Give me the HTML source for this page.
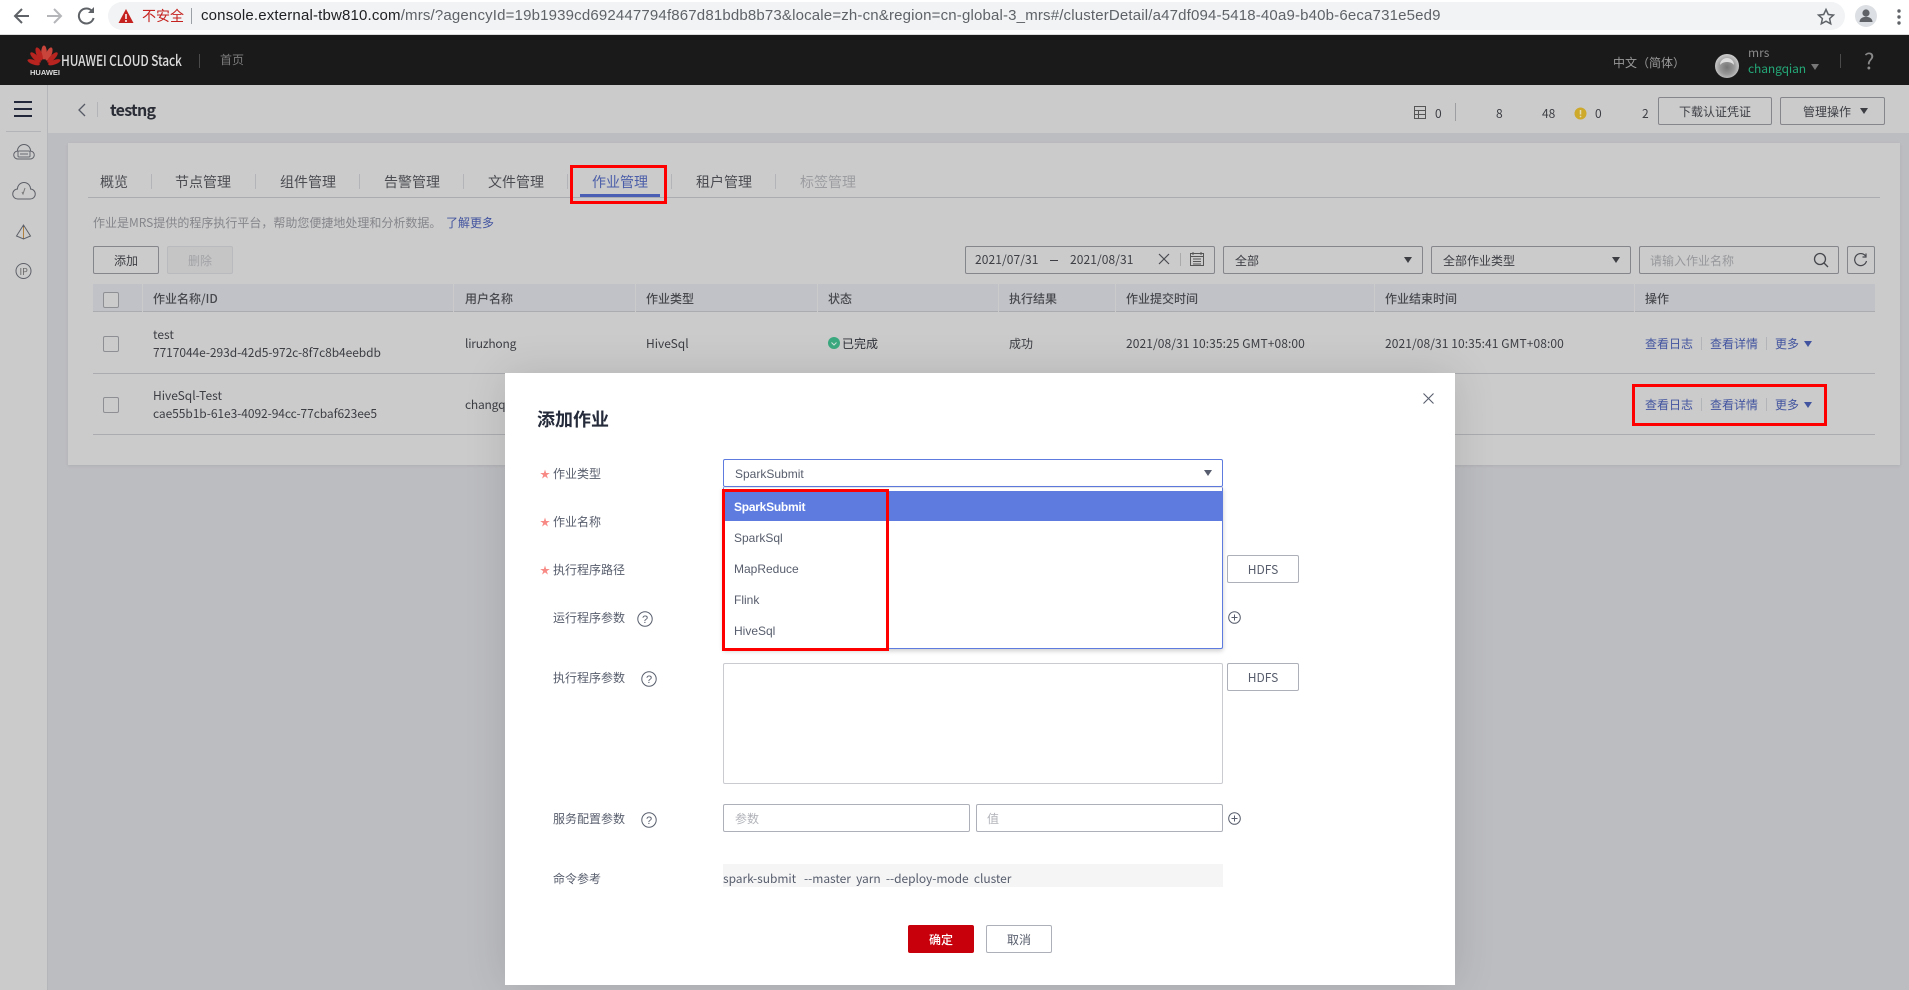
<!DOCTYPE html>
<html lang="zh-CN"><head><meta charset="utf-8"><title>添加作业</title>
<style>
*{box-sizing:border-box;margin:0;padding:0}
html,body{width:1909px;height:990px;overflow:hidden;background:#bcbdc1}
body{position:relative;font:12px/16px "Noto Sans CJK SC","Liberation Sans",sans-serif;color:#3c3e44}
.a,.t,svg{position:absolute}
.t{white-space:nowrap;height:16px;margin-top:1px}
.b{position:absolute;border:1px solid #85868c;border-radius:2px;text-align:center;line-height:28px}
.m{border-color:#adb0b8;color:#575d6c;background:#fff}
.h{position:absolute;top:284px;height:28px;width:1px;background:#cbcbcb}
.l{position:absolute;background:#abacb0;height:1px}
.th{font-weight:500;color:#47494f;top:290px}
.lk{color:#42549f}
.tab{font-size:14px;top:172px;height:18px;line-height:18px;color:#4b4c52}
.sp{position:absolute;width:1px;background:#b3b4b8}
.lb{color:#575d6c}
.s{color:#f88a86;font-size:10px}
.r{position:absolute;border:3px solid #f00}
.i{color:#575d6c;left:734px;font-family:"Liberation Sans",sans-serif}
.ts{letter-spacing:.08px}
.id{letter-spacing:-.07px}
svg{overflow:visible}
</style></head><body>

<!-- Browser chrome -->
<div class="a" style="left:0;top:0;width:1909px;height:35px;background:#fff;border-bottom:1px solid #dcdcdc"></div>
<svg style="left:0;top:0" width="110" height="34" fill="none" stroke-width="2">
<path d="M29 16H16M22 9l-7 7 7 7" stroke="#5f6368"/>
<path d="M47 16h13M54 9l7 7-7 7" stroke="#b4b6b9"/>
<path d="M92 11a7.5 7.5 0 1 0 1.6 7" stroke="#5f6368"/><path d="M94 7v6h-6z" fill="#5f6368"/>
</svg>
<div class="a" style="left:108px;top:2px;width:1737px;height:28px;border-radius:14px;background:#f1f3f4"></div>
<svg style="left:118px;top:8px" width="18" height="18"><path d="M8 1l7.500 14H.5z" fill="#c5221f"/><path d="M8 6v5M8 12v2" stroke="#fff" stroke-width="1.500"/></svg>
<div class="t" style="left:142px;top:7px;font-size:14px;color:#c5221f">不安全</div>
<div class="a" style="left:191px;top:8px;width:1px;height:16px;background:#9aa0a6"></div>
<div class="t" style="left:201px;top:6px;font:15px/18px 'Liberation Sans',sans-serif;color:#202124;letter-spacing:.17px;height:18px">console.external-tbw810.com<span style="color:#5f6368">/mrs/?agencyId=19b1939cd692447794f867d81bdb8b73&amp;locale=zh-cn&amp;region=cn-global-3_mrs#/clusterDetail/a47df094-5418-40a9-b40b-6eca731e5ed9</span></div>
<svg style="left:1816px;top:7px" width="20" height="20"><path d="M10 2.500l2.300 5 5.200.6-3.900 3.500 1.100 5.200L10 14.200l-4.700 2.600 1.100-5.200L2.500 8.100l5.200-.6z" fill="none" stroke="#5f6368" stroke-width="1.500"/></svg>
<svg style="left:1855px;top:5px" width="24" height="24"><ellipse cx="11" cy="11" rx="11" ry="11" fill="#dcdfe3"/><circle cx="11" cy="8" r="3.600" fill="#5f6368"/><path d="M4.500 17c0-7 13-7 13 0z" fill="#5f6368"/></svg>
<svg style="left:1895px;top:8px" width="8" height="18" fill="#5f6368"><circle cx="4" cy="3" r="1.700"/><circle cx="4" cy="9" r="1.700"/><circle cx="4" cy="15" r="1.700"/></svg>

<!-- Dark top bar -->
<div class="a" style="left:0;top:35px;width:1909px;height:50px;background:#1a1a1a"></div>
<svg style="left:30px;top:46px" width="30" height="22"><g fill="#b8241f">
<ellipse cx="14" cy="6.500" rx="2.800" ry="7" fill="#c9443b"/>
<ellipse cx="14" cy="7" rx="2.800" ry="7" transform="rotate(-22 14 20)"/>
<ellipse cx="14" cy="7" rx="2.800" ry="7" transform="rotate(22 14 20)" fill="#c9443b"/>
<ellipse cx="14" cy="8" rx="2.500" ry="7" transform="rotate(-45 14 20)"/>
<ellipse cx="14" cy="8" rx="2.500" ry="7" transform="rotate(45 14 20)"/>
<ellipse cx="14" cy="9" rx="2.300" ry="6.500" transform="rotate(-70 14 20)"/>
<ellipse cx="14" cy="9" rx="2.300" ry="6.500" transform="rotate(70 14 20)"/>
</g></svg>
<div class="t" style="left:30px;top:67px;font:700 7.500px/9px 'Liberation Sans',sans-serif;color:#ddd;height:9px">HUAWEI</div>
<div class="t" style="left:61px;top:50px;font:500 15px/20px 'Noto Sans CJK SC',sans-serif;color:#dcdcdc;height:20px;letter-spacing:-.15px;transform-origin:left;transform:scaleX(.795)">HUAWEI CLOUD Stack</div>
<div class="a" style="left:199px;top:54px;width:1px;height:14px;background:#4a4a4a"></div>
<div class="t" style="left:220px;top:51px;color:#7c7c7c">首页</div>
<div class="t" style="left:1613px;top:54px;color:#9a9a9a">中文（简体）</div>
<svg style="left:1715px;top:54px" width="24" height="24"><defs><radialGradient id="av" cx=".5" cy=".55" r=".55"><stop offset="0" stop-color="#757575"/><stop offset=".55" stop-color="#999"/><stop offset="1" stop-color="#cfcfcf"/></radialGradient></defs><circle cx="12" cy="12" r="12" fill="url(#av)"/><path d="M5 11a7 7 0 0 1 14 0c-3-4-11-4-14 0z" fill="#dedede"/></svg>
<div class="t" style="left:1748px;top:44px;color:#8a8a8a">mrs</div>
<div class="t" style="left:1748px;top:60px;color:#24a878;letter-spacing:-.1px">changqian</div>
<svg style="left:1811px;top:64px" width="9" height="7"><path d="M0 0h8L4 6z" fill="#777"/></svg>
<div class="a" style="left:1840px;top:54px;width:1px;height:14px;background:#4a4a4a"></div>
<div class="t" style="left:1864px;top:47px;font:22px/24px 'Noto Sans CJK SC',sans-serif;color:#8a8a8a;height:24px">?</div>

<!-- Sidebar -->
<div class="a" style="left:0;top:85px;width:48px;height:905px;background:#cbcbcb;border-right:1px solid #b5b6b9"></div>
<svg style="left:14px;top:100px" width="19" height="18" fill="#22283a"><rect width="18" height="2" y="1"/><rect width="18" height="2" y="8"/><rect width="18" height="2" y="15"/></svg>
<div class="a" style="left:6px;top:131px;width:35px;height:1px;background:#b3b4b8"></div>
<svg style="left:12px;top:143px" width="24" height="140" fill="none" stroke="#5d6068" stroke-width="1">
<path d="M6 16a4 4 0 0 1 -.5-8 6.500 6.500 0 0 1 13 0 4 4 0 0 1-.5 8z"/><rect x="6" y="8" width="12" height="6" rx="1" stroke="#676a72"/><path d="M8 11h8" stroke="#676a72"/>
<path d="M6 56a5 5 0 0 1-.5-10 6.500 6.500 0 0 1 13 0 5 5 0 0 1-.5 10z"/><path d="M13 45l-2 6-1-2" stroke="#777"/>
<path d="M11.500 82l-7 11 7 3 7-3zM11.500 82v14" /><path d="M11.500 84v11" stroke="#b08040"/>
<circle cx="11.500" cy="128" r="7.500"/><text x="7.500" y="132" font-size="9" font-family="Noto Sans CJK SC,sans-serif" fill="#666" stroke="none">IP</text>
</svg>

<!-- Sub header -->
<div class="a" style="left:48px;top:85px;width:1861px;height:48px;background:#cbcbcb"></div>
<svg style="left:76px;top:102px" width="12" height="16"><path d="M9 2L3 8l6 6" fill="none" stroke="#555a66" stroke-width="1.300"/></svg>
<div class="a" style="left:97px;top:102px;width:1px;height:15px;background:#b3b4b8"></div>
<div class="t" style="left:110px;top:97px;font-size:16px;font-weight:700;color:#2a2d36;height:22px;line-height:22px;letter-spacing:-.75px">testng</div>

<svg style="left:1414px;top:106px" width="13" height="14" fill="none" stroke="#555"><rect x=".5" y=".5" width="11" height="12"/><path d="M.5 4.500h11M.5 8.500h11M4.500 4.500v8"/></svg>
<div class="t" style="left:1435px;top:105px">0</div>
<div class="a" style="left:1455px;top:103px;width:1px;height:18px;background:#9d9ea2"></div>
<div class="t" style="left:1496px;top:105px">8</div>
<div class="t" style="left:1542px;top:105px">48</div>
<svg style="left:1574px;top:107px" width="13" height="13"><circle cx="6.500" cy="6.500" r="6" fill="#cda92c"/><path d="M6.500 3v4.500M6.500 8.700v1.500" stroke="#e6dcb4" stroke-width="1.500"/></svg>
<div class="t" style="left:1595px;top:105px">0</div>
<div class="t" style="left:1642px;top:105px">2</div>
<div class="b" style="left:1658px;top:97px;width:114px;height:28px">下载认证凭证</div>
<div class="b" style="left:1780px;top:97px;width:105px;height:28px;text-align:left;padding-left:22px">管理操作</div>
<svg style="left:1860px;top:108px" width="9" height="7"><path d="M0 0h8L4 6z" fill="#3c3e44"/></svg>

<!-- Card -->
<div class="a" style="left:68px;top:143px;width:1832px;height:322px;background:#cbcbcb;box-shadow:0 1px 3px rgba(0,0,0,.08)"></div>
<div class="t tab" style="left:100px">概览</div><div class="sp" style="left:151px;top:174px;height:15px"></div>
<div class="t tab" style="left:175px">节点管理</div><div class="sp" style="left:255px;top:174px;height:15px"></div>
<div class="t tab" style="left:280px">组件管理</div><div class="sp" style="left:359px;top:174px;height:15px"></div>
<div class="t tab" style="left:384px">告警管理</div><div class="sp" style="left:463px;top:174px;height:15px"></div>
<div class="t tab" style="left:488px">文件管理</div><div class="sp" style="left:567px;top:174px;height:15px"></div>
<div class="t tab" style="left:592px;color:#4a5da8">作业管理</div><div class="sp" style="left:671px;top:174px;height:15px"></div>
<div class="t tab" style="left:696px">租户管理</div><div class="sp" style="left:775px;top:174px;height:15px"></div>
<div class="t tab" style="left:800px;color:#9c9da1">标签管理</div>
<div class="l" style="left:88px;top:197px;width:1792px"></div>
<div class="a" style="left:580px;top:194px;width:80px;height:3px;background:#4a5fb3"></div>

<div class="t" style="left:93px;top:214px;color:#85868b">作业是MRS提供的程序执行平台，帮助您便捷地处理和分析数据。</div>
<div class="t lk" style="left:446px;top:214px">了解更多</div>
<div class="b" style="left:93px;top:246px;width:66px;height:28px">添加</div>
<div class="b" style="left:167px;top:246px;width:66px;height:28px;background:#c5c5c6;border-color:#b9babd;color:#a2a3a6">删除</div>

<div class="b" style="left:965px;top:246px;width:250px;height:28px"></div>
<div class="t ts" style="left:975px;top:251px">2021/07/31</div>
<div class="a" style="left:1050px;top:260px;width:8px;height:1px;background:#3c3e44"></div>
<div class="t ts" style="left:1070px;top:251px">2021/08/31</div>
<svg style="left:1158px;top:253px" width="12" height="12"><path d="M1 1l10 10M11 1L1 11" stroke="#4a4c52" stroke-width="1.200"/></svg>
<div class="a" style="left:1180px;top:253px;width:1px;height:13px;background:#aaa"></div>
<svg style="left:1190px;top:252px" width="14" height="15" fill="none" stroke="#555"><rect x=".5" y="1.500" width="13" height="12"/><path d="M.5 4.500h13M3 0v3M11 0v3M3 7h8M3 9.500h8M3 12h8"/></svg>

<div class="b" style="left:1223px;top:246px;width:200px;height:28px;text-align:left;padding-left:11px">全部</div>
<svg style="left:1404px;top:257px" width="9" height="7"><path d="M0 0h8L4 6z" fill="#3c3e44"/></svg>
<div class="b" style="left:1431px;top:246px;width:200px;height:28px;text-align:left;padding-left:11px">全部作业类型</div>
<svg style="left:1612px;top:257px" width="9" height="7"><path d="M0 0h8L4 6z" fill="#3c3e44"/></svg>
<div class="b" style="left:1639px;top:246px;width:200px;height:28px;text-align:left;padding-left:10px;color:#97989c">请输入作业名称</div>
<svg style="left:1813px;top:252px" width="16" height="16" fill="none" stroke="#45474d" stroke-width="1.300"><circle cx="7" cy="7" r="5.500"/><path d="M11 11l4 4"/></svg>
<div class="b" style="left:1847px;top:246px;width:28px;height:28px"></div>
<svg style="left:1854px;top:253px" width="14" height="14" fill="none" stroke="#45474d" stroke-width="1.200"><path d="M11.500 3a6 6 0 1 0 1 5"/><path d="M12 .5v3.500H8.500"/></svg>

<!-- Table -->
<div class="a" style="left:93px;top:284px;width:1782px;height:28px;background:#c1c2c7;border-bottom:1px solid #abacb0"></div>
<div class="h" style="left:142px"></div><div class="h" style="left:453px"></div><div class="h" style="left:635px"></div><div class="h" style="left:817px"></div><div class="h" style="left:998px"></div><div class="h" style="left:1115px"></div><div class="h" style="left:1374px"></div><div class="h" style="left:1634px"></div>
<div class="a" style="left:103px;top:292px;width:16px;height:16px;border:1px solid #8e8f94;border-radius:2px;background:#cbcbcb"></div>
<div class="t th" style="left:153px">作业名称/ID</div>
<div class="t th" style="left:465px">用户名称</div>
<div class="t th" style="left:646px">作业类型</div>
<div class="t th" style="left:828px">状态</div>
<div class="t th" style="left:1009px">执行结果</div>
<div class="t th" style="left:1126px">作业提交时间</div>
<div class="t th" style="left:1385px">作业结束时间</div>
<div class="t th" style="left:1645px">操作</div>

<div class="a" style="left:103px;top:336px;width:16px;height:16px;border:1px solid #8e8f94;border-radius:2px"></div>
<div class="t" style="left:153px;top:326px">test</div>
<div class="t id" style="left:153px;top:344px">7717044e-293d-42d5-972c-8f7c8b4eebdb</div>
<div class="t" style="left:465px;top:335px;letter-spacing:-.2px">liruzhong</div>
<div class="t" style="left:646px;top:335px">HiveSql</div>
<svg style="left:828px;top:337px" width="12" height="12"><circle cx="6" cy="6" r="6" fill="#3ba97f"/><path d="M3.500 5.500L6 8l2.500-2.500" fill="none" stroke="#cfe5dc" stroke-width="1"/></svg>
<div class="t" style="left:842px;top:335px;color:#2e3038">已完成</div>
<div class="t" style="left:1009px;top:335px">成功</div>
<div class="t ts" style="left:1126px;top:335px">2021/08/31 10:35:25 GMT+08:00</div>
<div class="t ts" style="left:1385px;top:335px">2021/08/31 10:35:41 GMT+08:00</div>
<div class="t lk" style="left:1645px;top:335px">查看日志</div><div class="sp" style="left:1701px;top:337px;height:13px"></div>
<div class="t lk" style="left:1710px;top:335px">查看详情</div><div class="sp" style="left:1766px;top:337px;height:13px"></div>
<div class="t lk" style="left:1775px;top:335px">更多</div>
<svg style="left:1804px;top:341px" width="9" height="7"><path d="M0 0h8L4 6z" fill="#42549f"/></svg>
<div class="l" style="left:93px;top:373px;width:1782px"></div>

<div class="a" style="left:103px;top:397px;width:16px;height:16px;border:1px solid #8e8f94;border-radius:2px"></div>
<div class="t" style="left:153px;top:387px">HiveSql-Test</div>
<div class="t id" style="left:153px;top:405px">cae55b1b-61e3-4092-94cc-77cbaf623ee5</div>
<div class="t" style="left:465px;top:396px;letter-spacing:-.2px">changqian</div>
<div class="t lk" style="left:1645px;top:396px">查看日志</div><div class="sp" style="left:1701px;top:398px;height:13px"></div>
<div class="t lk" style="left:1710px;top:396px">查看详情</div><div class="sp" style="left:1766px;top:398px;height:13px"></div>
<div class="t lk" style="left:1775px;top:396px">更多</div>
<svg style="left:1804px;top:402px" width="9" height="7"><path d="M0 0h8L4 6z" fill="#42549f"/></svg>
<div class="l" style="left:93px;top:434px;width:1782px"></div>

<div class="r" style="left:570px;top:165px;width:97px;height:39px"></div>
<div class="r" style="left:1632px;top:384px;width:195px;height:42px"></div>

<!-- Modal -->
<div class="a" style="left:505px;top:373px;width:950px;height:612px;background:#fff;box-shadow:0 0 40px rgba(0,0,0,.12)"></div>
<div class="t" style="left:537px;top:406px;font-size:18px;font-weight:700;color:#252b3a;height:24px;line-height:24px">添加作业</div>
<svg style="left:1423px;top:393px" width="11" height="11"><path d="M.5.500l10 10M10.500.500l-10 10" stroke="#575d6c" stroke-width="1.100"/></svg>

<div class="t s" style="left:540px;top:465px">★</div><div class="t lb" style="left:553px;top:465px">作业类型</div>
<div class="t s" style="left:540px;top:513px">★</div><div class="t lb" style="left:553px;top:513px">作业名称</div>
<div class="t s" style="left:540px;top:561px">★</div><div class="t lb" style="left:553px;top:561px">执行程序路径</div>
<div class="t lb" style="left:553px;top:609px">运行程序参数</div>
<div class="t lb" style="left:553px;top:669px">执行程序参数</div>
<div class="t lb" style="left:553px;top:810px">服务配置参数</div>
<div class="t lb" style="left:553px;top:870px">命令参考</div>
<svg style="left:637px;top:611px" width="16" height="16" fill="none" stroke="#575d6c"><circle cx="8" cy="8" r="7.200"/><text x="5" y="12" font-size="11" font-family="Liberation Sans,sans-serif" fill="#575d6c" stroke="none">?</text></svg>
<svg style="left:641px;top:671px" width="16" height="16" fill="none" stroke="#575d6c"><circle cx="8" cy="8" r="7.200"/><text x="5" y="12" font-size="11" font-family="Liberation Sans,sans-serif" fill="#575d6c" stroke="none">?</text></svg>
<svg style="left:641px;top:812px" width="16" height="16" fill="none" stroke="#575d6c"><circle cx="8" cy="8" r="7.200"/><text x="5" y="12" font-size="11" font-family="Liberation Sans,sans-serif" fill="#575d6c" stroke="none">?</text></svg>

<div class="b m" style="left:1227px;top:555px;width:72px;height:28px">HDFS</div>
<div class="b m" style="left:1227px;top:663px;width:72px;height:28px">HDFS</div>
<svg style="left:1228px;top:611px" width="13" height="13" fill="none" stroke="#575d6c"><circle cx="6.500" cy="6.500" r="5.800"/><path d="M6.500 3.500v6M3.500 6.500h6"/></svg>
<svg style="left:1228px;top:812px" width="13" height="13" fill="none" stroke="#575d6c"><circle cx="6.500" cy="6.500" r="5.800"/><path d="M6.500 3.500v6M3.500 6.500h6"/></svg>

<div class="a" style="left:723px;top:663px;width:500px;height:121px;border:1px solid #c9cbd1;border-radius:2px"></div>
<div class="b m" style="left:723px;top:804px;width:247px;height:28px;text-align:left;padding-left:11px;color:#b0b2b8">参数</div>
<div class="b m" style="left:976px;top:804px;width:247px;height:28px;text-align:left;padding-left:10px;color:#b0b2b8">值</div>
<div class="a" style="left:723px;top:864px;width:500px;height:23px;background:#f5f5f6"></div>
<div class="t lb" style="left:723px;top:870px;white-space:pre;letter-spacing:-.05px">spark-submit   --master  yarn  --deploy-mode  cluster</div>
<div class="b" style="left:908px;top:925px;width:66px;height:28px;background:#c7000b;border-color:#c7000b;color:#fff;font-weight:500">确定</div>
<div class="b m" style="left:986px;top:925px;width:66px;height:28px">取消</div>

<!-- Select + dropdown -->
<div class="b" style="left:723px;top:459px;width:500px;height:28px;border-color:#5e7ce0;text-align:left;padding-left:11px;color:#575d6c;background:#fff;font-family:'Liberation Sans',sans-serif">SparkSubmit</div>
<svg style="left:1204px;top:470px" width="9" height="7"><path d="M0 0h8L4 6z" fill="#575d6c"/></svg>
<div class="a" style="left:723px;top:487px;width:500px;height:162px;background:#fff;border:1px solid #5e7ce0;border-top:1px solid #e4e5ea;border-radius:0 0 2px 2px;box-shadow:0 2px 5px rgba(0,0,0,.2)"></div>
<div class="a" style="left:724px;top:491px;width:498px;height:30px;background:#5e7ce0"></div>
<div class="t" style="left:734px;top:498px;color:#fff;font-family:'Liberation Sans',sans-serif;font-weight:700;letter-spacing:-.25px">SparkSubmit</div>
<div class="t i" style="top:529px">SparkSql</div>
<div class="t i" style="top:560px">MapReduce</div>
<div class="t i" style="top:591px">Flink</div>
<div class="t i" style="top:622px">HiveSql</div>
<div class="r" style="left:722px;top:489px;width:167px;height:162px"></div>
</body></html>
